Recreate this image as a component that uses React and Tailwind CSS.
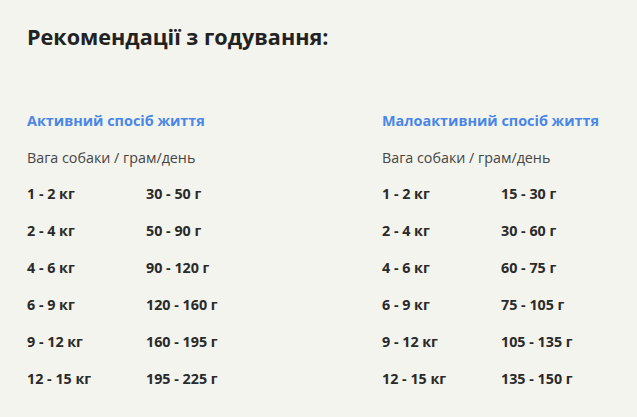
import React from "react";

const active = [
  ["1 - 2 кг", "30 - 50 г"],
  ["2 - 4 кг", "50 - 90 г"],
  ["4 - 6 кг", "90 - 120 г"],
  ["6 - 9 кг", "120 - 160 г"],
  ["9 - 12 кг", "160 - 195 г"],
  ["12 - 15 кг", "195 - 225 г"],
];
const low = [
  ["1 - 2 кг", "15 - 30 г"],
  ["2 - 4 кг", "30 - 60 г"],
  ["4 - 6 кг", "60 - 75 г"],
  ["6 - 9 кг", "75 - 105 г"],
  ["9 - 12 кг", "105 - 135 г"],
  ["12 - 15 кг", "135 - 150 г"],
];

function Section({ title, rows, className }) {
  return (
    <div className={className}>
      <div className="text-[14.4px] leading-[20px] font-bold text-[#4a86e8]">{title}</div>
      <div className="mt-[17px] text-[14.3px] leading-[20px] text-[#444]">Вага собаки / грам/день</div>
      <div className="mt-[7.5px]">
        {rows.map(([w, g]) => (
          <div key={w} className="flex h-[37px] items-center text-[14.3px] font-bold text-[#2a2a2a]">
            <div className="w-[119px]">{w}</div>
            <div>{g}</div>
          </div>
        ))}
      </div>
    </div>
  );
}

export default function App() {
  return (
    <div
      className="w-[637px] h-[417px] bg-[#f4f4ee] pl-[27px] pt-[23px] overflow-hidden"
      style={{ fontFamily: '"Open Sans", "Noto Sans", sans-serif' }}
    >
      <h1 className="text-[21.6px] leading-[28px] font-bold text-[#222]">Рекомендації з годування:</h1>
      <div className="mt-[60px] flex">
        <Section title="Активний спосіб життя" rows={active} className="w-[355px]" />
        <Section title="Малоактивний спосіб життя" rows={low} />
      </div>
    </div>
  );
}
